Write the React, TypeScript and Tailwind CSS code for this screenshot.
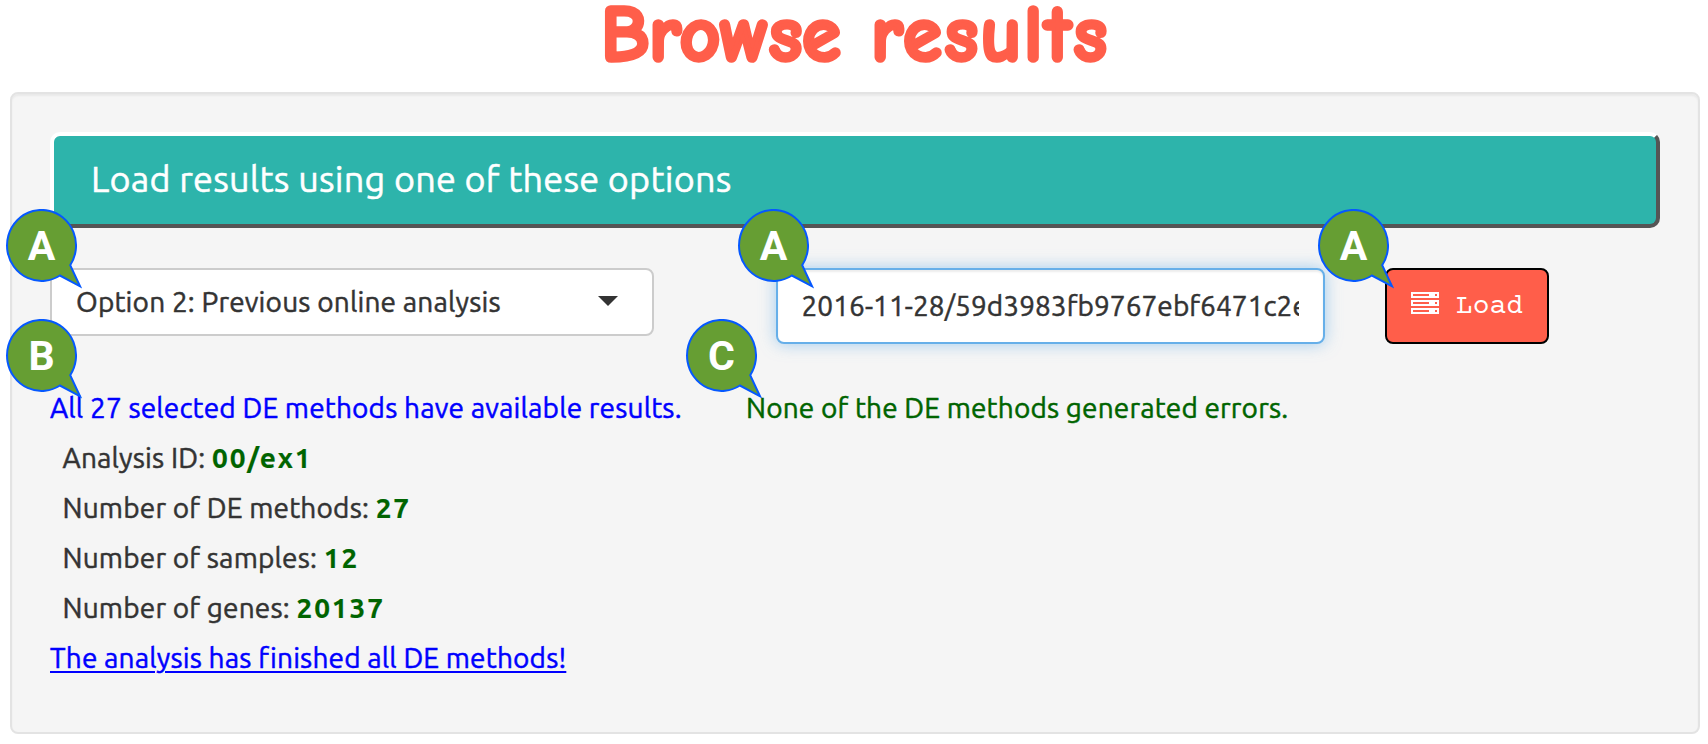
import type { ReactNode } from "react";

function Callout({ letter, className }: { letter: string; className: string }) {
  return (
    <svg
      className={`pointer-events-none absolute z-10 h-[82px] w-[78px] ${className}`}
      viewBox="0 0 78 82"
      aria-hidden="true"
    >
      <path
        d="M64.2 56.2A34.5 35.5 0 1 0 53.9 66.5L74 77.3Z"
        fill="#669e33"
        stroke="#0558ff"
        strokeWidth="2"
        strokeLinejoin="miter"
      />
      <text
        x="35.5"
        y="51"
        textAnchor="middle"
        className="fill-white font-[Roboto,'Liberation_Sans',sans-serif] text-[41px] font-bold"
      >
        {letter}
      </text>
    </svg>
  );
}

function TasksIcon() {
  return (
    <svg className="h-[22px] w-7 shrink-0" viewBox="0 0 28 22" fill="#fff" shapeRendering="crispEdges">
      <path
        fillRule="evenodd"
        d="M0 0h28v6H0zM2 2v2h16V2zM24 2v2h2V2zM0 8h28v6H0zM2 10v2h16v-2zM24 10v2h2v-2zM0 16h28v6H0zM2 18v2h16v-2zM24 18v2h2v-2z"
      />
    </svg>
  );
}

function Stat({ label, children }: { label: string; children: ReactNode }) {
  return (
    <p className="h-[50px] pl-[12.5px] tracking-[0.18px]">
      {label} <b className="font-bold tracking-[1.9px] text-[#006400] [-webkit-text-stroke:0.2px]">{children}</b>
    </p>
  );
}

export default function App() {
  return (
    <div className="h-[744px] bg-white pr-2 pl-2.5 font-[Ubuntu,'Noto_Sans',sans-serif] text-[28px] text-[#333] [-webkit-text-stroke:0.5px]">
      <h1 className="h-[92px] text-center font-['Comic_Neue','Comic_Sans_MS',cursive] text-[80px] leading-[71px] font-bold tracking-[-0.8px] text-[#ff5e4a] [word-spacing:3px] [-webkit-text-stroke:3.6px_#ff5e4a]">
        Browse <span className="tracking-[2.1px]">results</span>
      </h1>

      <main className="h-[642px] rounded-lg border-2 border-[#e3e3e3] bg-[#f5f5f5] p-[38px] shadow-[inset_0_2px_2px_rgba(0,0,0,0.05)]">
        <h2 className="flex h-24 items-center rounded-[10px] border-4 border-t-white border-r-[#555] border-b-[#555] border-l-white bg-[#2db4ab] pb-0.5 pl-[37px] text-[36px] font-normal tracking-[0.22px] text-white">
          Load results using one of these options
        </h2>

        <div className="mt-10 flex h-[76px] items-start">
          <div className="relative w-[604px]">
            <button className="flex h-[68px] w-full items-center justify-between rounded-lg border-2 border-[#ccc] bg-white pr-[34px] pl-6 tracking-[0.17px]">
              Option 2: Previous online analysis
              <svg className="mb-0.5 h-2.5 w-5" viewBox="0 0 20 10" fill="#333">
                <path d="M0 0h20L10 10z" />
              </svg>
            </button>
            <Callout letter="A" className="-top-[59px] -left-[44px]" />
          </div>

          <div className="relative ml-[122px] w-[549px]">
            <input
              readOnly
              defaultValue="2016-11-28/59d3983fb9767ebf6471c2e"
              className="block h-[76px] w-full rounded-lg border-2 border-[#66afe9] bg-white pr-6 pb-0.5 pl-[23.5px] tracking-[0.07px] shadow-[inset_0_2px_2px_rgba(0,0,0,0.075),0_0_16px_rgba(102,175,233,0.6)] outline-none"
            />
            <Callout letter="A" className="-top-[59px] -left-[38px]" />
          </div>

          <div className="relative ml-[60px] w-[164px]">
            <button className="flex h-[76px] w-full items-center rounded-lg border-2 border-black bg-[#ff5e4a] pl-6 font-['Courier_Prime','Nimbus_Mono_PS','FreeMono','Cutive_Mono','Liberation_Mono',monospace] text-white [-webkit-text-stroke:0]">
              <span className="flex items-center gap-[17px] pb-1.5">
                <TasksIcon />
                <span className="pt-2 leading-7">Load</span>
              </span>
            </button>
            <Callout letter="A" className="-top-[59px] -left-[67px]" />
          </div>
        </div>

        <div className="mt-[39px] flex leading-[50px]">
          <section className="relative w-[695px]">
            <Callout letter="B" className="-top-[64px] -left-[44px]" />
            <p className="tracking-[0.16px] text-[#00f]">All 27 selected DE methods have available results.</p>
            <Stat label="Analysis ID:">00/ex1</Stat>
            <Stat label="Number of DE methods:">27</Stat>
            <Stat label="Number of samples:">12</Stat>
            <Stat label="Number of genes:">20137</Stat>
            <p className="tracking-[0.16px] text-[#00f]">
              <u className="decoration-2 underline-offset-[3px]">The analysis has finished all DE methods!</u>
            </p>
          </section>
          <section className="relative pl-px">
            <Callout letter="C" className="-top-[64px] -left-[59px]" />
            <p className="tracking-[0.15px] text-[#006400]">None of the DE methods generated errors.</p>
          </section>
        </div>
      </main>
    </div>
  );
}
